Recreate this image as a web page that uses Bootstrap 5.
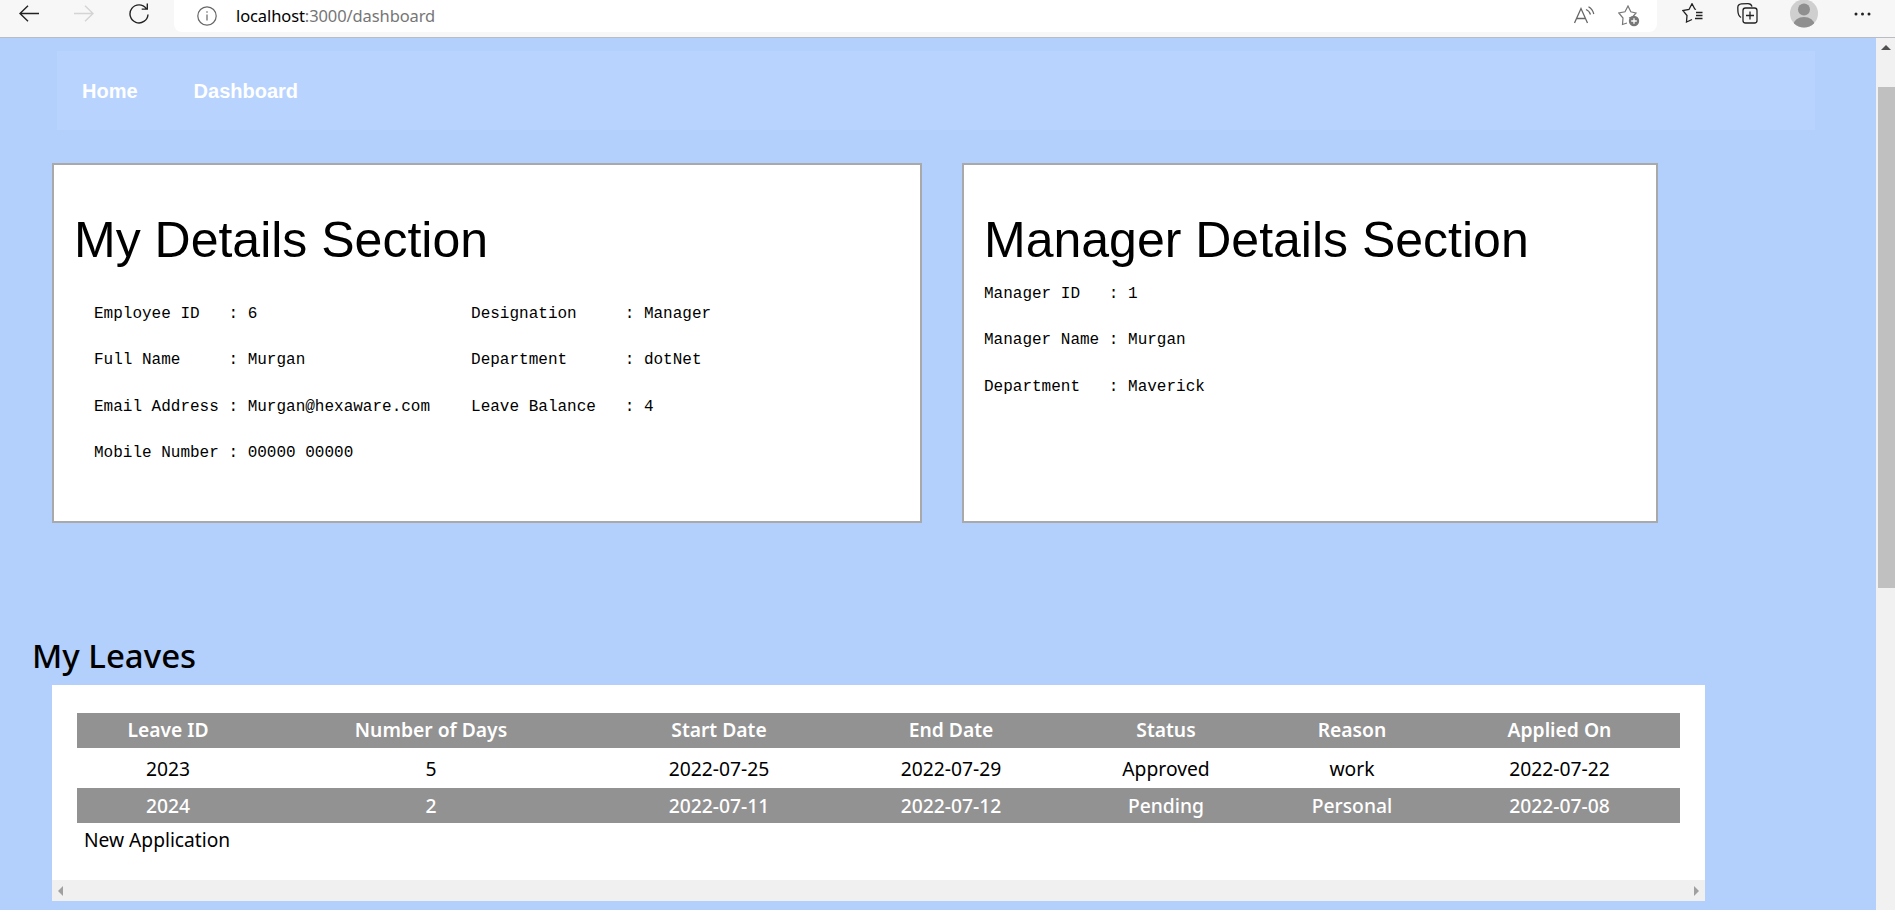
<!DOCTYPE html>
<html lang="en">
<head>
  <meta charset="UTF-8">
  <meta name="viewport" content="width=device-width, initial-scale=1.0">
  <title>Dashboard</title>
  <link href="https://cdn.jsdelivr.net/npm/bootstrap@5.3.3/dist/css/bootstrap.min.css" rel="stylesheet">
  <style>
    html, body { height: 910px; overflow: hidden; }
    body { background-color: #b2d0fb; font-family: "Noto Sans", sans-serif; color: #000; }
    /* browser chrome */
    .chrome-bar { height: 38px; background-color: #f7f7f7; border-bottom: 1px solid #b9bcc2; }
    .chrome-btn { display: block; flex: none; }
    .btn-back { margin-left: 19px; margin-top: 5px; }
    .btn-forward { margin-left: 35px; margin-top: 5px; }
    .btn-reload { margin-left: 35px; margin-top: 2px; }
    .address-box { width: 1483px; height: 32px; margin-left: 25px; background-color: #fff; border-radius: 0 0 8px 8px; padding-left: 23px; }
    .address-text { margin-left: 19px; font-size: 16.5px; letter-spacing: -.1px; color: #767676; }
    .address-text b { font-weight: 400; color: #000; }
    .address-tools { margin-left: auto; margin-right: 17px; gap: 23px; }
    .btn-fav { margin-left: 25px; margin-top: 3px; }
    .btn-coll { margin-left: 34px; margin-top: 3px; }
    .btn-avatar { margin-left: 32px; }
    .btn-more { margin-left: 36px; margin-top: 9px; }
    /* page */
    .page-wrap { height: 872px; }
    .page-main { width: 1876px; flex: none; }
    .page-scroll { width: 19px; flex: none; background-color: #f1f1f1; padding: 7px 0 0 2px; }
    .scroll-thumb { height: 501px; margin-top: 37px; background-color: #c0c0c0; }
    .scroll-up { width: 0; height: 0; margin-left: 3px; border: 5px solid transparent; border-top: 0; border-bottom: 5px solid #505050; margin-top: 0; }
    .top-nav { height: 79px; margin: 13px 61px 0 57px; padding-left: 25px; gap: 56px; background-color: #b9d3ff; }
    .top-nav a { font-family: "Liberation Sans", Arial, sans-serif; font-size: 20px; font-weight: 700; color: #fff; text-decoration: none; }
    .details-row { margin: 33px 0 0 52px; gap: 40px; }
    .details-box { height: 360px; background-color: #fff; border: 2px solid #a9a9a9; padding: 46px 0 0 20px; }
    .box-my { width: 870px; }
    .box-manager { width: 696px; }
    .details-title { font-family: "Liberation Sans", Arial, sans-serif; font-size: 50px; font-weight: 400; line-height: 58px; margin: 0; }
    .detail-list { margin: 0; padding-top: 2px; font-family: "Liberation Mono", "Courier New", monospace; font-size: 16px; }
    .detail-list div { height: 46.3px; line-height: 46px; white-space: pre; }
    .my-columns { padding: 20px 0 0 20px; }
    .my-col2 { margin-left: 41px; }
    .leaves-title { margin: 103px 0 0 32px; font-size: 33px; font-weight: 500; line-height: 59px; }
    .leaves-panel { width: 1653px; height: 216px; margin-left: 52px; background-color: #fff; padding-top: 28px; }
    .leaves-table { width: 1603px; margin: 0 25px; table-layout: fixed; border-collapse: collapse; font-size: 19.3px; text-align: center; }
    .leaves-table th, .leaves-table td { padding: 0; }
    .leaves-table th { font-weight: 600; height: 35px; }
    .leaves-table td { height: 40px; padding-top: 2px; }
    .leaves-table .row-gray th, .leaves-table .row-gray td { height: 35px; background-color: #929292; color: #fff; }
    .leaves-table .row-gray td { font-weight: 500; }
    .w-c1 { width: 182px; } .w-c2 { width: 344px; } .w-c3 { width: 232px; } .w-c4 { width: 232px; }
    .w-c5 { width: 198px; } .w-c6 { width: 174px; } .w-c7 { width: 241px; }
    .new-app { margin: 2px 0 0 32px; font-size: 19.200px; line-height: 30px; color: #000; text-decoration: none; display: inline-block; }
    .panel-scroll { height: 21px; margin-top: 25px; background-color: #f0f0f0; padding: 0 6px; }
    .arrow-left { width: 0; height: 0; border: 5px solid transparent; border-left: 0; border-right: 5px solid #a0a0a0; }
    .arrow-right { width: 0; height: 0; border: 5px solid transparent; border-right: 0; border-left: 5px solid #a0a0a0; }
  </style>
</head>
<body>
<div class="chrome-bar d-flex">
  <svg class="chrome-btn btn-back" width="20" height="18" viewBox="0 0 20 18" fill="none" stroke="#222" stroke-width="1.4"><path d="M20 8.500H1M9 .8 1 8.500l8 7.700"/></svg>
  <svg class="chrome-btn btn-forward" width="20" height="18" viewBox="0 0 20 18" fill="none" stroke="#d4d4d4" stroke-width="1.4"><path d="M0 8.500h19M11 .8l8 7.700-8 7.700"/></svg>
  <svg class="chrome-btn btn-reload" width="20" height="24" viewBox="0 0 20 24" fill="none" stroke="#222" stroke-width="1.4"><path d="M17.300 6.600A9 9 0 1 0 19 12.500M18.300 1.500v5.600h-5.600"/></svg>
  <div class="address-box d-flex align-items-center">
    <svg width="20" height="20" viewBox="0 0 20 20" fill="none" stroke="#666" stroke-width="1.2"><circle cx="10" cy="10" r="9.200"/><path d="M10 8.600v6M10 5.200v1.600"/></svg>
    <span class="address-text"><b>localhost</b>:3000/dashboard</span>
    <div class="address-tools d-flex align-items-center">
      <svg width="21" height="20" viewBox="0 0 21 20" fill="none" stroke="#666" stroke-width="1.3"><path d="M.5 17 7 2.500 13.500 17M2.700 12.500h8.600M12 3.500Q15.500 5 16.500 8.500M14.500 .8Q18.500 3 19.800 8"/></svg>
      <svg width="22" height="22" viewBox="0 0 22 22" fill="none"><path d="M11 13 15 11.500 18 8 12.800 6.800 10 1 7 6.800.8 8 5 13 4.500 19.500 9 18" stroke="#777" stroke-width="1.2"/><circle cx="16" cy="16" r="5.200" fill="#777"/><path d="M16 13.200v5.600M13.200 16h5.600" stroke="#fff" stroke-width="1.3"/></svg>
    </div>
  </div>
  <svg class="chrome-btn btn-fav" width="21" height="20" viewBox="0 0 21 20" fill="none" stroke="#222" stroke-width="1.3"><path d="M14 6.500 12.800 6 10 .7 7 6.500.8 7.500 5 12.500 4.500 19 10 16.500M14 9.500h6.500M14 12.500h6.500M13 15.500h7.500"/></svg>
  <svg class="chrome-btn btn-coll" width="21" height="21" viewBox="0 0 21 21" fill="none" stroke="#222" stroke-width="1.3"><path d="M4 14.500C1.500 13 1 11 .9 8L.8 4.500C.8 2 2 1 4.500 .8L11 .7c2 0 3.500 1 4 3"/><rect x="6" y="5" width="14" height="15" rx="2.500"/><path d="M13 8.500v8M9 12.500h8"/></svg>
  <svg class="chrome-btn btn-avatar" width="28" height="28" viewBox="0 0 28 28"><defs><clipPath id="avatarClip"><circle cx="14" cy="13.500" r="14"/></clipPath></defs><circle cx="14" cy="13.500" r="14" fill="#cfcfcf"/><g clip-path="url(#avatarClip)" fill="#8f8f8f"><circle cx="14" cy="9.500" r="6"/><ellipse cx="14" cy="25" rx="10.500" ry="8"/></g></svg>
  <svg class="chrome-btn btn-more" width="17" height="10" viewBox="0 0 17 10" fill="#222"><circle cx="2" cy="5" r="1.500"/><circle cx="8.500" cy="5" r="1.500"/><circle cx="15" cy="5" r="1.500"/></svg>
</div>

<div class="page-wrap d-flex">
  <div class="page-main">
    <nav class="top-nav d-flex align-items-center">
      <a href="#">Home</a>
      <a href="#">Dashboard</a>
    </nav>

    <div class="details-row d-flex">
      <section class="details-box box-my">
        <h1 class="details-title">My Details Section</h1>
        <div class="my-columns d-flex">
          <div class="detail-list">
            <div>Employee ID   : 6</div>
            <div>Full Name     : Murgan</div>
            <div>Email Address : Murgan@hexaware.com</div>
            <div>Mobile Number : 00000 00000</div>
          </div>
          <div class="detail-list my-col2">
            <div>Designation     : Manager</div>
            <div>Department      : dotNet</div>
            <div>Leave Balance   : 4</div>
          </div>
        </div>
      </section>
      <section class="details-box box-manager">
        <h1 class="details-title">Manager Details Section</h1>
        <div class="detail-list">
          <div>Manager ID   : 1</div>
          <div>Manager Name : Murgan</div>
          <div>Department   : Maverick</div>
        </div>
      </section>
    </div>

    <h2 class="leaves-title">My Leaves</h2>
    <div class="leaves-panel">
      <table class="leaves-table">
        <colgroup>
          <col class="w-c1"><col class="w-c2"><col class="w-c3"><col class="w-c4"><col class="w-c5"><col class="w-c6"><col class="w-c7">
        </colgroup>
        <thead>
          <tr class="row-gray"><th>Leave ID</th><th>Number of Days</th><th>Start Date</th><th>End Date</th><th>Status</th><th>Reason</th><th>Applied On</th></tr>
        </thead>
        <tbody>
          <tr><td>2023</td><td>5</td><td>2022-07-25</td><td>2022-07-29</td><td>Approved</td><td>work</td><td>2022-07-22</td></tr>
          <tr class="row-gray"><td>2024</td><td>2</td><td>2022-07-11</td><td>2022-07-12</td><td>Pending</td><td>Personal</td><td>2022-07-08</td></tr>
        </tbody>
      </table>
      <a class="new-app" href="#">New Application</a>
      <div class="panel-scroll d-flex align-items-center justify-content-between">
        <div class="arrow-left"></div>
        <div class="arrow-right"></div>
      </div>
    </div>
  </div>
  <div class="page-scroll">
    <div class="scroll-up"></div>
    <div class="scroll-thumb"></div>
  </div>
</div>
<script src="https://cdn.jsdelivr.net/npm/bootstrap@5.3.3/dist/js/bootstrap.bundle.min.js"></script>
</body>
</html>
